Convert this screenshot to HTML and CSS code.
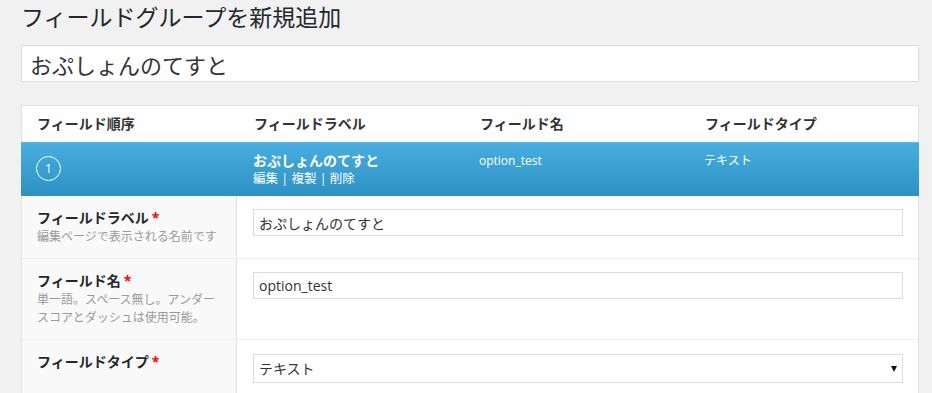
FILE: index.html
```html
<!DOCTYPE html>
<html lang="ja">
<head>
  <meta charset="UTF-8" />
  <title>フィールドグループを新規追加</title>
  <link rel="stylesheet" href="styles.css">
</head>
<body>
  <div class="wrap">
    <h1>フィールドグループを新規追加</h1>
    <input class="title-input" type="text" value="おぷしょんのてすと" />

    <div class="fields">
      <div class="fields-head">
        <div>フィールド順序</div>
        <div>フィールドラベル</div>
        <div>フィールド名</div>
        <div>フィールドタイプ</div>
      </div>

      <div class="field-row">
        <div><span class="order">1</span></div>
        <div>
          <div class="field-label">おぷしょんのてすと</div>
          <div class="row-actions"><a>編集</a> | <a>複製</a> | <a>削除</a></div>
        </div>
        <div class="field-meta">option_test</div>
        <div class="field-meta">テキスト</div>
      </div>

      <div class="opt first">
        <div class="opt-label">
          <label>フィールドラベル<span class="req">*</span></label>
          <p>編集ページで表示される名前です</p>
        </div>
        <div class="opt-input">
          <input type="text" value="おぷしょんのてすと" />
        </div>
      </div>

      <div class="opt">
        <div class="opt-label">
          <label>フィールド名<span class="req">*</span></label>
          <p>単一語。スペース無し。アンダー<br>スコアとダッシュは使用可能。</p>
        </div>
        <div class="opt-input">
          <input type="text" value="option_test" />
        </div>
      </div>

      <div class="opt">
        <div class="opt-label">
          <label>フィールドタイプ<span class="req">*</span></label>
        </div>
        <div class="opt-input">
          <div class="select-wrap">
            <select>
              <option>テキスト</option>
            </select>
          </div>
        </div>
      </div>
    </div>
  </div>
</body>
</html>
```

FILE: styles.css
```css
* {
  box-sizing: border-box;
}
body {
  margin: 0;
  background: #f1f1f1;
  font-family: "Open Sans", "Noto Sans CJK JP", sans-serif;
  color: #333;
  overflow: hidden;
}
.wrap {
  padding-left: 21px;
  width: 919px;
}
h1 {
  margin: 0;
  padding-top: 1px;
  font-size: 23px;
  font-weight: 400;
  line-height: 32px;
  color: #23282d;
}
.title-input {
  display: block;
  width: 100%;
  height: 37px;
  margin-top: 12px;
  padding: 0 8px;
  border: 1px solid #ddd;
  background: #fff;
  font-family: inherit;
  font-size: 22px;
  color: #333;
  outline: none;
}
.fields {
  margin-top: 23px;
  background: #fff;
  border: 1px solid #e1e1e1;
  border-bottom: none;
}
.fields-head,
.field-row {
  display: grid;
  grid-template-columns: 217px 226px 225px 1fr;
}
.fields-head > div,
.field-row > div {
  padding-left: 15px;
}
.fields-head {
  height: 36px;
  align-items: center;
  font-size: 14px;
  font-weight: 700;
  color: #333;
  line-height: 20px;
}
.field-row {
  height: 54px;
  margin: 0 -1px;
  padding-top: 9px;
  background: linear-gradient(#48aedf, #2c92c5);
  border-top: 1px solid #5ab6e2;
  color: #fff;
}
.order {
  display: inline-flex;
  align-items: center;
  justify-content: center;
  width: 25px;
  height: 25px;
  margin-top: 4px;
  border: 1px solid #fff;
  border-radius: 50%;
  font-size: 12px;
}
.field-label {
  font-size: 14px;
  font-weight: 700;
  line-height: 18px;
}
.row-actions {
  font-size: 12.5px;
  line-height: 18px;
}
.field-meta {
  font-size: 12px;
  line-height: 18px;
}
.opt {
  display: grid;
  grid-template-columns: 215px 1fr;
  border-top: 1px solid #eee;
}
.opt.first {
  border-top: none;
}
.opt-label {
  background: #f9f9f9;
  border-right: 1px solid #e1e1e1;
  padding: 13px 10px 12px 15px;
}
.opt-label label {
  display: block;
  font-size: 14px;
  font-weight: 700;
  line-height: 18px;
  color: #23282d;
}
.req {
  color: #f00;
  margin-left: 3px;
}
.opt-label p {
  margin: 1px 0 0;
  font-size: 12px;
  line-height: 18px;
  color: #999;
  white-space: nowrap;
}
.opt-input {
  padding: 13px 15px 12px 16px;
}
.opt-input input,
.opt-input select {
  display: block;
  width: 100%;
  height: 27px;
  padding: 0 5px;
  border: 1px solid #ddd;
  background: #fff;
  font-family: inherit;
  font-size: 14px;
  color: #333;
  outline: none;
}
.select-wrap {
  position: relative;
  margin-top: 1px;
}
.opt-input select {
  height: 29px;
  appearance: none;
  -webkit-appearance: none;
  border-radius: 0;
}
.select-wrap::after {
  content: "";
  position: absolute;
  right: 6px;
  top: 12px;
  border-left: 3.5px solid transparent;
  border-right: 3.5px solid transparent;
  border-top: 6px solid #111;
}
```
